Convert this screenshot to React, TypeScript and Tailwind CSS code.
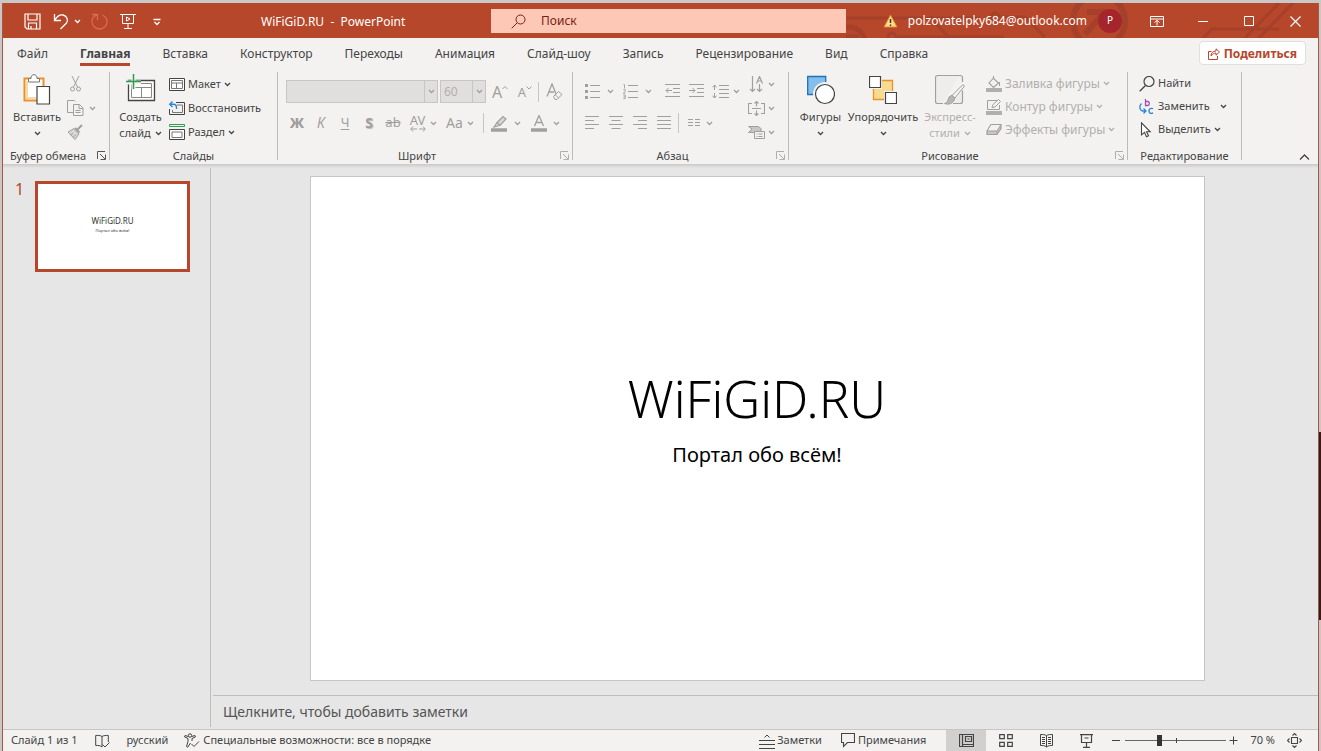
import React from "react";

type SvgProps = { w: number; h: number; className?: string; children: React.ReactNode };

function Svg({ w, h, className = "", children }: SvgProps) {
  return (
    <svg width={w} height={h} viewBox={`0 0 ${w} ${h}`} fill="none" stroke="currentColor" strokeWidth="1" aria-hidden="true" className={`shrink-0 ${className}`}>
      {children}
    </svg>
  );
}

function Chevron({ className = "" }: { className?: string }) {
  return (
    <Svg w={7} h={5} className={className}>
      <path d="M1 1 3.5 3.5 6 1" strokeWidth="1.3" />
    </Svg>
  );
}

function Launcher({ label, muted = false }: { label: string; muted?: boolean }) {
  return (
    <button aria-label={label} className={`absolute right-[3px] bottom-1 ${muted ? "text-[#b0aeac]" : "text-[#555]"}`}>
      <Svg w={9} h={9}>
        <path d="M.5 8V.5H8M3 3l5 5M8.500 3.500v5h-5" />
      </Svg>
    </button>
  );
}

type GroupProps = { title: string; width: string; launcher?: "on" | "muted"; children: React.ReactNode };

function Group({ title, width, launcher, children }: GroupProps) {
  return (
    <section aria-label={title} className={`relative flex shrink-0 flex-col ${width}`}>
      <div className="flex h-[76px]">{children}</div>
      <div className={`flex h-4 items-center justify-center text-[11px] text-[#444] ${launcher ? "pr-4" : ""}`}>{title}</div>
      {launcher && <Launcher label={`${title}: параметры`} muted={launcher === "muted"} />}
    </section>
  );
}

function Divider() {
  return <div className="h-[88px] w-px shrink-0 bg-[#bdbbb9]" />;
}

function MiniDivider() {
  return <div className="h-5 w-px shrink-0 bg-[#c8c6c4]" />;
}

type BigProps = { icon: React.ReactNode; lines: string[]; width: string; muted?: boolean };

function BigButton({ icon, lines, width, muted = false }: BigProps) {
  const two = lines.length === 2;
  return (
    <button className={`flex shrink-0 flex-col items-center pt-[2px] text-[11px] leading-4 whitespace-nowrap ${width} ${muted ? "text-[#b1afad]" : "text-[#444]"}`}>
      <span className="flex h-[35px] items-start justify-center">{icon}</span>
      <span>{lines[0]}</span>
      <span className="flex h-4 items-center gap-1">
        {two && lines[1]}
        <Chevron />
      </span>
    </button>
  );
}

type SmallProps = { icon: React.ReactNode; label: string; chevron?: boolean; muted?: boolean; tall?: boolean; far?: boolean };

function SmallButton({ icon, label, chevron = true, muted = false, tall = false, far = false }: SmallProps) {
  return (
    <button className={`flex items-center whitespace-nowrap ${tall ? "h-6" : "h-[23px]"} ${muted ? "text-xs text-[#b1afad]" : "text-[11px] text-[#444]"}`}>
      <span className="flex w-[19px] items-center">{icon}</span>
      {label}
      {chevron && <Chevron className={far ? "ml-[10px]" : "ml-[3px]"} />}
    </button>
  );
}

function ToolButton({ label, width, children }: { label: string; width: string; children: React.ReactNode }) {
  return (
    <button aria-label={label} className={`flex h-6 shrink-0 items-center justify-center ${width}`}>
      {children}
    </button>
  );
}

/* ---------- Title bar ---------- */

function Circuit() {
  return (
    <svg viewBox="0 0 473 35" preserveAspectRatio="xMaxYMid slice" className="absolute inset-0 h-full w-full" fill="none" stroke="#a5402a" strokeWidth="3" aria-hidden="true">
      <path d="M0 15h85l20 20" />
      <circle cx="4" cy="40" r="16" strokeWidth="5" />
      <path d="M-8 34h22" strokeWidth="5" />
      <circle cx="47" cy="34" r="4" />
      <path d="M51 34h108M85 15h50M146 14a4 4 0 1 1 8 0 4 4 0 0 1-8 0M154 14h26l20 20" />
      <circle cx="254" cy="18" r="26" strokeWidth="6" />
      <path d="M240 31l18-20M242 9h17v18" strokeWidth="6" />
      <path d="M358 35l9-9h67M400 35l34-35M414 35l34-35" />
    </svg>
  );
}

function TitleBar() {
  return (
    <header className="grid h-[35px] shrink-0 grid-cols-[488fr_355fr_472fr] bg-[#b7472a] text-xs text-white">
      <div className="flex items-center pt-[2px] pl-[21px]">
        <button aria-label="Сохранить">
          <Svg w={17} h={17}>
            <path d="M1 1h15v15H3l-2-2zM4 1v6h9V1M4.500 16v-6h8v6M7 13v3" strokeWidth="1.2" />
          </Svg>
        </button>
        <button aria-label="Отменить" className="ml-3 flex items-center gap-[5px]">
          <Svg w={16} h={17}>
            <path d="M1.500 1v6.500H8M1.800 7C4 3.500 7 1.500 10 2c4 .7 5.500 5 3.500 8L7.500 16" strokeWidth="1.3" />
          </Svg>
          <Chevron />
        </button>
        <button aria-label="Повторить" className="ml-[10px] text-[#e0674a]">
          <Svg w={17} h={17}>
            <path d="M1 1.500h5.500V7M6 1.800C2.500 3 .8 6 1 9c.4 4 3.500 7 7.500 7S16 13 16 9c0-3-1.500-5.500-4.500-7" strokeWidth="1.3" />
          </Svg>
        </button>
        <button aria-label="Показ слайдов" className="ml-3">
          <Svg w={16} h={17}>
            <path d="M0 1.500h16M2.500 1.500v9h11v-9M8 10.500v5M4 15.500h8M6.500 4l3.500 2-3.500 2z" />
          </Svg>
        </button>
        <button aria-label="Настройка панели" className="ml-[17px]">
          <Svg w={8} h={8}>
            <path d="M.5 1.500h7M1.500 4 4 6.500 6.500 4" strokeWidth="1.3" />
          </Svg>
        </button>
        <h1 className="ml-[100px] whitespace-pre">WiFiGiD.RU  -  PowerPoint</h1>
      </div>
      <label className="mt-[6px] mb-[5px] flex items-center bg-[#fdc8b5] pl-5 text-[#7a2015]">
        <Svg w={15} h={15}>
          <circle cx="9.500" cy="5.500" r="4.500" />
          <path d="M6.200 8.800.7 14.300" />
        </Svg>
        <input aria-label="Поиск" placeholder="Поиск" className="ml-[15px] w-full bg-transparent outline-none placeholder:text-[#7a2015]" />
      </label>
      <div className="relative flex items-center justify-end">
        <Circuit />
        <div className="relative flex items-center pt-px">
          <Svg w={15} h={14}>
            <path d="M7.500 1 14 13H1z" fill="#ffe08a" stroke="#e8862e" />
            <path d="M7.500 5v4M7.500 10.500v1.500" stroke="#333" strokeWidth="1.500" />
          </Svg>
          <span className="ml-[10px]">polzovatelpky684@outlook.com</span>
          <span className="ml-[11px] flex h-6 w-6 items-center justify-center rounded-full bg-[#a4262c] text-[10px]">P</span>
          <button aria-label="Параметры ленты" className="ml-3 flex w-[46px] justify-center">
            <Svg w={14} h={11}>
              <path d="M.5.500h13v10H.5zM.5 3h13M7 9.500V4.500M4.500 6.500 7 4.300l2.500 2.200" />
            </Svg>
          </button>
          <button aria-label="Свернуть" className="flex w-[46px] justify-center">
            <Svg w={10} h={10}><path d="M0 5.500h10" /></Svg>
          </button>
          <button aria-label="Развернуть" className="flex w-[46px] justify-center">
            <Svg w={10} h={10}><path d="M.5.500h9v9h-9z" /></Svg>
          </button>
          <button aria-label="Закрыть" className="flex w-[46px] justify-center">
            <Svg w={11} h={11}><path d="M.5.500l10 10M10.500.500l-10 10" strokeWidth="1.200" /></Svg>
          </button>
        </div>
      </div>
    </header>
  );
}

/* ---------- Tabs ---------- */

const tabs = ["Файл", "Главная", "Вставка", "Конструктор", "Переходы", "Анимация", "Слайд-шоу", "Запись", "Рецензирование", "Вид", "Справка"];

function Tabs() {
  return (
    <nav className="flex h-[34px] shrink-0 items-start justify-between bg-[#f3f2f1] pr-3 pl-[14px] text-xs text-[#444]">
      <div className="flex gap-8">
        {tabs.map((t) => (
          <button key={t} className={`h-7 border-b-[3px] pt-[6px] leading-4 ${t === "Главная" ? "border-[#b7472a] font-bold" : "border-transparent"}`}>
            {t}
          </button>
        ))}
      </div>
      <button className="mt-[3px] flex h-6 items-center gap-1 rounded-sm border border-[#e1dfdd] bg-white px-2 pt-px font-bold text-[#b7472a]">
        <Svg w={12} h={12}>
          <path d="M3.500 3.500h-3v8h9V8M3 8c0-3 2-5 5-5V.8L11.500 4 8 7.200V5C6 5 4.500 6 3 8z" />
        </Svg>
        Поделиться
      </button>
    </nav>
  );
}

/* ---------- Ribbon icons ---------- */

function PasteIcon() {
  return (
    <Svg w={28} h={31}>
      <path d="M1.500 4.500h19v22h-19z" fill="#fff" stroke="#e8912d" strokeWidth="2" />
      <path d="M4 7v17h9" stroke="#fbd9a3" strokeWidth="2" />
      <path d="M5.500 8V4.500H8C8 2 9 .7 11 .7s3 1.300 3 3.800h2.500V8z" fill="#fff" stroke="#777" />
      <path d="M14 12.500h12.500v17.500H14z" fill="#fff" stroke="#444" strokeWidth="1.200" />
    </Svg>
  );
}

function NewSlideIcon() {
  return (
    <Svg w={30} h={28}>
      <path d="M2.500 6.500h26v20h-26z" fill="#fff" strokeWidth="1.300" />
      <path d="M5.500 9.500h20v14h-20zM5.500 13.500h20M15.500 13.500v10" stroke="#8a8886" />
      <path d="M0 8.500h15M7.500 0v15" stroke="#f3f2f1" strokeWidth="4" />
      <path d="M0 7.500h15M7.500 0v15" stroke="#2f9e4f" strokeWidth="1.500" />
    </Svg>
  );
}

function LayoutIcon() {
  return (
    <Svg w={16} h={13}>
      <path d="M.5.500h15v12H.5z" fill="#fff" />
      <path d="M2.500 2.500h11v8h-11zM2.500 5h11M7.500 5v5.500" stroke="#777" />
    </Svg>
  );
}

function ResetIcon() {
  return (
    <Svg w={16} h={14}>
      <path d="M7 1.500h8.500v12H.5V8" />
      <path d="M8 4h5.500v7.500h-10V9" stroke="#777" />
      <path d="M3.500.500.8 3.200l2.700 2.700M1 3.200h3.500c2 0 3 1.300 3 3.300V8" stroke="#2b88d8" strokeWidth="1.400" />
    </Svg>
  );
}

function SectionIcon() {
  return (
    <Svg w={16} h={16}>
      <path d="M.5.500h15v2H.5z" stroke="#2f9e4f" />
      <path d="M.5 5.500h15v10H.5z" fill="#fff" />
      <path d="M3 8h10v5.500H3z" stroke="#777" />
    </Svg>
  );
}

function ClipboardGroup() {
  return (
    <Group title="Буфер обмена" width="w-[106px]" launcher="on">
      <BigButton icon={<PasteIcon />} lines={["Вставить"]} width="w-[68px]" />
      <div className="flex flex-col text-[#a19f9d]">
        <ToolButton label="Вырезать" width="w-[9px]">
          <Svg w={11} h={16}>
            <path d="M2 0l5.500 11M9 0 3.500 11" />
            <circle cx="2.500" cy="13" r="2" />
            <circle cx="8.500" cy="13" r="2" />
          </Svg>
        </ToolButton>
        <button aria-label="Копировать" className="flex h-6 items-center gap-[5px]">
          <Svg w={17} h={16} className="-ml-1">
            <path d="M6 12.500H.5V.500h7l1 1" />
            <path d="M6.500 4.500h6l3.500 3.500v7.500H6.500zM12 4.500V8.500h4M8.500 10.500h5M8.500 12.500h5" />
          </Svg>
          <Chevron />
        </button>
        <button aria-label="Формат по образцу" className="flex h-6 items-center">
          <Svg w={16} h={16} className="-ml-1">
            <path d="M15 1 10.500 5.500M8 4l4.500 4.500" strokeWidth="2" />
            <path d="M7 4.500 1 8l7 7.500 4-5.500z" fill="#d8d6d4" />
            <path d="M3 11l3-1.500M6 13.500l3-3" />
          </Svg>
        </button>
      </div>
    </Group>
  );
}

function SlidesGroup() {
  return (
    <Group title="Слайды" width="w-[167px]">
      <div className="flex pl-[2px]">
        <BigButton icon={<NewSlideIcon />} lines={["Создать", "слайд"]} width="w-[57px]" />
        <div className="flex flex-col">
          <SmallButton tall icon={<LayoutIcon />} label="Макет" />
          <SmallButton tall icon={<ResetIcon />} label="Восстановить" chevron={false} />
          <SmallButton tall icon={<SectionIcon />} label="Раздел" />
        </div>
      </div>
    </Group>
  );
}

function Combo({ label, value, width }: { label: string; value: string; width: string }) {
  return (
    <div className={`relative flex h-[23px] shrink-0 ${width}`}>
      <select aria-label={label} defaultValue={value} className="h-full w-full appearance-none border border-[#c8c6c4] bg-[#e1dfdd] pl-[3px] text-xs text-[#b1afad]">
        <option value={value}>{value}</option>
      </select>
      <span className="pointer-events-none absolute inset-y-0 right-0 flex w-[14px] items-center justify-center border-l border-[#c8c6c4] text-[#a19f9d]">
        <Chevron />
      </span>
    </div>
  );
}

function FontGroup() {
  return (
    <Group title="Шрифт" width="w-[294px]" launcher="muted">
      <div className="flex flex-col gap-2 pt-2 pl-2 text-[#a19f9d]">
        <div className="flex h-[23px] items-center">
          <Combo label="Шрифт" value="" width="w-[152px]" />
          <div className="w-[2px]" />
          <Combo label="Размер шрифта" value="60" width="w-[46px]" />
          <ToolButton label="Увеличить размер" width="w-7">
            <span className="text-base leading-4">A</span>
            <Svg w={6} h={14}><path d="M.5 4 3 1.500 5.500 4" /></Svg>
          </ToolButton>
          <ToolButton label="Уменьшить размер" width="w-[22px]">
            <span className="text-[13px] leading-4">A</span>
            <Svg w={6} h={14}><path d="M.5 1.500 3 4l2.500-2.500" /></Svg>
          </ToolButton>
          <div className="w-[2px]" />
          <MiniDivider />
          <ToolButton label="Очистить форматирование" width="w-[30px]">
            <Svg w={17} h={18}>
              <path d="M1 13.500 6 1l4.500 11M3 9h5" strokeWidth="1.300" />
              <path d="M7.500 13.500l5-5 3.500 3-5 5h-2zM9 11.500l3.500 3.500" fill="#f3f2f1" />
            </Svg>
          </ToolButton>
        </div>
        <div className="-ml-px flex h-6 items-center">
          <ToolButton label="Полужирный" width="w-6"><span className="text-sm font-extrabold">Ж</span></ToolButton>
          <ToolButton label="Курсив" width="w-6"><span className="text-sm italic">К</span></ToolButton>
          <ToolButton label="Подчёркнутый" width="w-6"><span className="text-[13px] underline underline-offset-2">Ч</span></ToolButton>
          <ToolButton label="Тень" width="w-6"><span className="text-sm font-bold [text-shadow:1px_1px_1px_#bbb]">S</span></ToolButton>
          <ToolButton label="Зачёркнутый" width="w-6"><span className="text-[13px] line-through">ab</span></ToolButton>
          <ToolButton label="Межзнаковый интервал" width="w-9">
            <span className="mr-1 flex flex-col items-center">
              <span className="text-[13px] leading-3">AV</span>
              <Svg w={16} h={6}><path d="M3 .5.700 3 3 5.500M1 3h6M13 .500 15.300 3 13 5.500M15 3H9" /></Svg>
            </span>
            <Chevron />
          </ToolButton>
          <ToolButton label="Регистр" width="w-[38px]">
            <span className="mr-1 text-sm">Aa</span>
            <Chevron />
          </ToolButton>
          <div className="w-1" />
          <MiniDivider />
          <ToolButton label="Цвет выделения" width="w-11">
            <Svg w={17} h={17} className="mr-[6px]">
              <path d="M6 7.500 12 1.500l3 2.500-6 6.500zM6 7.500 3 12l5.500-1.500" fill="#d8d6d4" strokeWidth="1.200" />
              <path d="M0 15h16" strokeWidth="3.500" />
            </Svg>
            <Chevron />
          </ToolButton>
          <ToolButton label="Цвет текста" width="w-[34px]">
            <Svg w={16} h={17} className="mr-[6px]">
              <path d="M3.500 11 8 .500l4.500 10.500M5 7.500h6" strokeWidth="1.300" />
              <path d="M0 15h16" strokeWidth="3.500" />
            </Svg>
            <Chevron />
          </ToolButton>
        </div>
      </div>
    </Group>
  );
}

function ParagraphGroup() {
  return (
    <Group title="Абзац" width="w-[215px]" launcher="muted">
      <div className="flex flex-col gap-2 pt-[7px] pl-[11px] text-[#a19f9d]">
        <div className="flex h-6 items-center">
          <ToolButton label="Маркеры" width="w-[30px]">
            <Svg w={16} h={15} className="mr-[6px]">
              <path d="M0 1.500h3M0 7.500h3M0 13.500h3" strokeWidth="3" />
              <path d="M5 1.500h10M5 7.500h10M5 13.500h10" />
            </Svg>
            <Chevron />
          </ToolButton>
          <ToolButton label="Нумерация" width="w-[46px]">
            <Svg w={16} h={15} className="mr-[6px]">
              <path d="M5 1.500h10M5 7.500h10M5 13.500h10" />
              <path d="M.5.500h1v4M.3 5.800h2v1.700l-2 1.700h2M.3 11h2v3.500h-2M.5 12.700h1.500" strokeWidth=".9" />
            </Svg>
            <Chevron />
          </ToolButton>
          <ToolButton label="Уменьшить отступ" width="w-6">
            <Svg w={15} h={14}>
              <path d="M0 .500h15M8 4.500h7M8 8.500h7M0 12.500h15M1 6.500h6M3.500 4 1 6.500 3.500 9" />
            </Svg>
          </ToolButton>
          <ToolButton label="Увеличить отступ" width="w-6">
            <Svg w={15} h={14}>
              <path d="M0 .500h15M8 4.500h7M8 8.500h7M0 12.500h15M0 6.500h6M3.500 4 6 6.500 3.500 9" />
            </Svg>
          </ToolButton>
          <ToolButton label="Междустрочный интервал" width="w-9">
            <Svg w={17} h={15} className="mr-1">
              <path d="M7 1.500h10M7 5.500h10M7 9.500h10M7 13.500h10M2.500 1v5M2.500 9v5M.5 3.300 2.500 1l2 2.300M.5 11.700l2 2.300 2-2.300" />
            </Svg>
            <Chevron />
          </ToolButton>
        </div>
        <div className="flex h-6 items-center">
          <ToolButton label="По левому краю" width="w-6 -ml-1">
            <Svg w={14} h={14}><path d="M0 .500h14M0 4.500h9M0 8.500h14M0 12.500h9" strokeWidth="1.200" /></Svg>
          </ToolButton>
          <ToolButton label="По центру" width="w-6">
            <Svg w={14} h={14}><path d="M0 .500h14M2.500 4.500h9M0 8.500h14M2.500 12.500h9" strokeWidth="1.200" /></Svg>
          </ToolButton>
          <ToolButton label="По правому краю" width="w-6">
            <Svg w={14} h={14}><path d="M0 .500h14M5 4.500h9M0 8.500h14M5 12.500h9" strokeWidth="1.200" /></Svg>
          </ToolButton>
          <ToolButton label="По ширине" width="w-6">
            <Svg w={14} h={14}><path d="M0 .500h14M0 4.500h14M0 8.500h14M0 12.500h14" strokeWidth="1.200" /></Svg>
          </ToolButton>
          <div className="w-[2px]" />
          <MiniDivider />
          <ToolButton label="Колонки" width="w-[42px]">
            <Svg w={12} h={8} className="mr-[6px]"><path d="M0 .500h5M7 .500h5M0 3.500h5M7 3.500h5M0 6.500h5M7 6.500h5" /></Svg>
            <Chevron />
          </ToolButton>
        </div>
      </div>
      <div className="ml-auto flex flex-col pr-[13px] text-[#a19f9d]">
        <ToolButton label="Направление текста" width="w-7">
          <Svg w={16} h={17} className="mr-[4px]">
            <path d="M4.500 0v15.500M2 13l2.500 2.500L7 13M11.500 8v7.500M9 13l2.500 2.500L14 13M8.500 7.500l3-7 3 7M9.500 5h4" strokeWidth="1.200" />
          </Svg>
          <Chevron />
        </ToolButton>
        <ToolButton label="Выровнять текст" width="w-7">
          <Svg w={17} h={15} className="mr-[3px]">
            <path d="M4 2.500H.5v10H4M13 2.500h3.500v10H13M4 7.500h9M8.500 0v5.500M8.500 9.500V15M6.500 2.500l2-2 2 2M6.500 12.500l2 2 2-2" strokeWidth="1.100" />
          </Svg>
          <Chevron />
        </ToolButton>
        <ToolButton label="Преобразовать в SmartArt" width="w-7">
          <Svg w={17} h={13} className="mr-[3px]">
            <path d="M.5.500h10l3 2.500-2 3.500H.5L4 3z" fill="#c8c6c4" />
            <path d="M6.500 5.500h10v7h-10zM8.500 8h1M10.500 8h4M8.500 10.500h1M10.500 10.500h4" fill="#f3f2f1" />
          </Svg>
          <Chevron />
        </ToolButton>
      </div>
    </Group>
  );
}

function DrawingGroup() {
  return (
    <Group title="Рисование" width="w-[338px]" launcher="muted">
      <BigButton
        width="w-[63px]"
        lines={["Фигуры"]}
        icon={
          <Svg w={28} h={31}>
            <path d="M.7 2.500h18v18h-18z" fill="#83beec" stroke="#1e72b8" strokeWidth="1.300" />
            <circle cx="18" cy="20" r="10.500" fill="#fff" stroke="#f3f2f1" strokeWidth="3" />
            <circle cx="18" cy="20" r="9.500" fill="#fff" strokeWidth="1.200" />
          </Svg>
        }
      />
      <BigButton
        width="w-[62px]"
        lines={["Упорядочить"]}
        icon={
          <Svg w={28} h={31}>
            <path d="M4.500 6.500h19v19h-19z" fill="#f8db8f" stroke="#e8912d" strokeWidth="1.300" />
            <path d="M0 2h12v12H0zM16 18h12v12H16z" fill="#f3f2f1" stroke="#f3f2f1" strokeWidth="2" />
            <path d="M.5 2.500h11v11H.5zM16.500 18.500h11v11h-11z" fill="#fff" strokeWidth="1.200" />
          </Svg>
        }
      />
      <BigButton
        muted
        width="w-[72px]"
        lines={["Экспресс-", "стили"]}
        icon={
          <Svg w={31} h={31} className="text-[#a19f9d]">
            <path d="M24.500 1.500h-22a2 2 0 0 0-2 2v24a2 2 0 0 0 2 2H8M18 29.500h7.500a2 2 0 0 0 2-2v-11M27.500 8V3.500a2 2 0 0 0-2-2h-3" fill="#ededed" strokeWidth="1.200" />
            <path d="M29.500 12 20 24l-3-2.500L28 10.500z" fill="#f3f2f1" />
            <path d="M17 21.500c-3 .5-3.500 2-4 4.500-.5 2-2 3-3.500 3.500 4 1.500 9 .5 10.500-5.500z" fill="#b8b6b4" />
          </Svg>
        }
      />
      <div className="flex flex-col">
        <SmallButton
          muted
          label="Заливка фигуры"
          icon={
            <Svg w={16} h={16} className="text-[#a19f9d]">
              <path d="M7.500 2 3 7l4.500 4.500L12.500 7 7.500 2.500V0M13.500 6v4" strokeWidth="1.100" />
              <path d="M0 14h16" strokeWidth="4" stroke="#b1afad" />
            </Svg>
          }
        />
        <SmallButton
          muted
          label="Контур фигуры"
          icon={
            <Svg w={16} h={16} className="text-[#a19f9d]">
              <path d="M11 1.500H1.500v9h12V6M6 8.500l1-3L12.500.5l2 2L9 8z" fill="#f3f2f1" />
              <path d="M0 14h16" strokeWidth="4" stroke="#b1afad" />
            </Svg>
          }
        />
        <SmallButton
          muted
          label="Эффекты фигуры"
          icon={
            <Svg w={16} h={14} className="text-[#a19f9d]">
              <path d="M5 1.500h10v4l-4 6H1v-3z" fill="#c8c6c4" strokeWidth="1.200" />
              <path d="M5 1.500h10L11 8H1z" fill="#f3f2f1" />
              <path d="M11 8v3.500" />
            </Svg>
          }
        />
      </div>
    </Group>
  );
}

function EditingGroup() {
  return (
    <Group title="Редактирование" width="w-[113px]">
      <div className="flex flex-col pl-[11px]">
        <SmallButton
          chevron={false}
          label="Найти"
          icon={
            <Svg w={16} h={16}>
              <circle cx="10" cy="5.500" r="5" strokeWidth="1.200" />
              <path d="M6.500 9.500.7 15.300" strokeWidth="1.300" />
            </Svg>
          }
        />
        <SmallButton
          far
          label="Заменить"
          icon={
            <Svg w={16} h={16}>
              <path d="M6.500 0v6.500h2.300c2 0 2-4 0-4H6.500" stroke="#a050b0" strokeWidth="1.300" />
              <path d="M14 9.700c-3-1-4 .5-4 2.300s1.500 3 4 2" stroke="#2b88d8" strokeWidth="1.400" />
              <path d="M2.500 4.500C-.5 7.500 1 12 4 12h3M4.500 9.500 7 12l-2.500 2.500" stroke="#2b88d8" strokeWidth="1.300" />
            </Svg>
          }
        />
        <SmallButton
          label="Выделить"
          icon={
            <Svg w={16} h={16}>
              <path d="M2.500.8v12l3-2.500 2 4.500 2-1-2-4h3.700z" fill="#fff" strokeWidth="1.100" />
            </Svg>
          }
        />
      </div>
    </Group>
  );
}

function Ribbon() {
  return (
    <div className="flex h-[92px] shrink-0 overflow-hidden bg-[#f3f2f1]">
      <ClipboardGroup />
      <Divider />
      <SlidesGroup />
      <Divider />
      <FontGroup />
      <Divider />
      <ParagraphGroup />
      <Divider />
      <DrawingGroup />
      <Divider />
      <EditingGroup />
      <Divider />
      <button aria-label="Свернуть ленту" className="mt-auto ml-auto pr-2 pb-[3px] text-[#444]">
        <Svg w={11} h={7}><path d="M1 5.500 5.500 1 10 5.500" strokeWidth="1.300" /></Svg>
      </button>
    </div>
  );
}

/* ---------- Workspace ---------- */

function Workspace() {
  return (
    <main className="flex min-h-0 flex-1 flex-col bg-[#e6e6e6]">
      <div className="h-1 shrink-0 bg-linear-to-b from-[#cbc9c8] to-[#e6e6e6]" />
      <div className="flex min-h-0 flex-1 pb-[2px]">
        <aside className="flex w-[208px] shrink-0 items-start border-r border-[#bebebe] pt-[13px] pl-3">
          <span className="w-5 text-base leading-4 text-[#b7472a]">1</span>
          <button aria-label="Слайд 1" className="flex h-[91px] w-[155px] flex-col items-center border-[3px] border-[#b7472a] bg-white pt-[31px] text-[#333]">
            <span className="text-[8px] leading-[12px]">WiFiGiD.RU</span>
            <span className="text-[4px] leading-[7px]">Портал обо всём!</span>
          </button>
        </aside>
        <div className="flex min-w-0 flex-1 flex-col pl-[2px]">
          <div className="flex min-h-0 flex-1 justify-center pt-2 pr-[17px] pb-[14px]">
            <article className="flex aspect-[895/505] h-full flex-col items-center border border-[#c6c6c6] bg-white pt-[187px] text-black">
              <h2 className="text-[51px] leading-[68px] font-light">WiFiGiD.RU</h2>
              <p className="mt-[7px] text-xl leading-8">Портал обо всём!</p>
            </article>
          </div>
          <input
            aria-label="Заметки к слайду"
            placeholder="Щелкните, чтобы добавить заметки"
            className="h-8 shrink-0 border-t border-[#bebebe] bg-transparent px-[10px] text-sm outline-none placeholder:text-[#555]"
          />
        </div>
      </div>
    </main>
  );
}

/* ---------- Status bar ---------- */

function ViewButton({ label, active = false, children }: { label: string; active?: boolean; children: React.ReactNode }) {
  return (
    <button aria-label={label} className={`flex h-full w-10 items-center justify-center ${active ? "bg-[#d2d0ce]" : ""}`}>
      {children}
    </button>
  );
}

function StatusBar() {
  return (
    <footer className="flex h-[22px] shrink-0 items-center justify-between border-t border-[#c8c6c4] bg-[#f3f2f1] text-[11px] whitespace-nowrap text-[#444]">
      <div className="flex items-center pl-2">
        <span>Слайд 1 из 1</span>
        <button aria-label="Правописание" className="ml-[18px]">
          <Svg w={15} h={14}>
            <path d="M7 2.500C5.500 1.300 3 1.300.7 1.500v10c2.300-.2 4.800 0 6.300 1.500zM7 2.500c1.500-1 4-1.200 6.300-1V8M7.500 10.500 10 13l4.500-4.500" />
          </Svg>
        </button>
        <button className="ml-4">русский</button>
        <button className="ml-4 flex items-center gap-[3px]">
          <Svg w={16} h={15}>
            <circle cx="6" cy="2.500" r="1.700" />
            <path d="M4.300 3.500 1 2.500.6 4 4 5.500v3L2.500 13.500l1.300.7L6.500 10M7.700 3.500l3.300-1 .4 1.500L8 5.500V8M7.500 11l2.500 2.500L15 8.500" />
          </Svg>
          Специальные возможности: все в порядке
        </button>
      </div>
      <div className="flex h-full items-center pr-4">
        <button className="flex items-center gap-[2px]">
          <Svg w={16} h={16}><path d="M0 7.500h16M0 11.500h16M0 15.500h16M5.500 4.500 8 2l2.500 2.500" /></Svg>
          Заметки
        </button>
        <button className="mr-5 ml-[19px] flex items-center gap-[3px]">
          <Svg w={14} h={15}><path d="M.5.500h13v9H6.500L2.500 13.500v-4h-2z" strokeWidth="1.100" /></Svg>
          Примечания
        </button>
        <ViewButton label="Обычный" active>
          <Svg w={15} h={13}><path d="M.5.500h14v12H.5zM3.500.500v12M6.500 2.500h6v5h-6zM8.500 5h2M3.500 10.500h11" strokeWidth="1.200" /></Svg>
        </ViewButton>
        <ViewButton label="Сортировщик слайдов">
          <Svg w={14} h={13}><path d="M.7.700h4.600v4H.7zM8.700.700h4.600v4H8.700zM.7 8.300h4.600v4H.7zM8.700 8.300h4.600v4H8.700z" strokeWidth="1.200" /></Svg>
        </ViewButton>
        <ViewButton label="Режим чтения">
          <Svg w={13} h={14}><path d="M6.500 1.500C5 .500 2.500.500.5.500v11c2 0 4.500 0 6 1.500 1.500-1.500 4-1.500 6-1.500V.500c-2 0-4.500 0-6 1zM6.500 1.500V13M2 3.500h3M2 5.500h3M2 7.500h3M2 9.500h3M8 3.500h3M8 5.500h3M8 7.500h3M8 9.500h3" /></Svg>
        </ViewButton>
        <ViewButton label="Показ слайдов">
          <Svg w={13} h={14}><path d="M0 .700h13M1.500.700v7.800h10V.700M6.500 8.500v5M3 13.300h7M4.500 4h4" strokeWidth="1.200" /></Svg>
        </ViewButton>
        <button aria-label="Уменьшить" className="ml-[5px]"><Svg w={10} h={10}><path d="M1 4.500h8" /></Svg></button>
        <div className="relative ml-1 flex h-[22px] w-[101px] items-center">
          <span className="absolute top-2 left-1/2 h-[5px] w-px bg-[#444]" />
          <input
            type="range"
            aria-label="Масштаб"
            min={10}
            max={190}
            defaultValue={70}
            className="w-full appearance-none bg-transparent [&::-webkit-slider-runnable-track]:h-px [&::-webkit-slider-runnable-track]:bg-[#666] [&::-webkit-slider-thumb]:-mt-[5px] [&::-webkit-slider-thumb]:h-[11px] [&::-webkit-slider-thumb]:w-[5px] [&::-webkit-slider-thumb]:appearance-none [&::-webkit-slider-thumb]:bg-[#333]"
          />
        </div>
        <button aria-label="Увеличить" className="ml-[3px]"><Svg w={9} h={9}><path d="M.5 4.500h8M4.500.500v8" /></Svg></button>
        <button className="ml-3">70 %</button>
        <button aria-label="Вписать в окно" className="ml-3">
          <Svg w={15} h={15}><path d="M4.500 4.500h6v6h-6zM5.500 2.500l2-2 2 2M5.500 12.500l2 2 2-2M2.500 5.500l-2 2 2 2M12.500 5.500l2 2-2 2" strokeWidth="1.100" /></Svg>
        </button>
      </div>
    </footer>
  );
}

export default function App() {
  return (
    <div className="flex h-screen overflow-hidden bg-[#c9c7c7] pt-[3px] pl-[2px] [font-family:'Noto_Sans',sans-serif]">
      <div className="flex min-w-0 flex-1 flex-col border-x border-[#b0543c]">
        <TitleBar />
        <Tabs />
        <Ribbon />
        <Workspace />
        <StatusBar />
      </div>
      <div className="flex w-[2px] flex-col">
        <div className="flex-[429]" />
        <div className="flex-[188] bg-[#2c1f1d]" />
        <div className="flex-[131]" />
      </div>
    </div>
  );
}
